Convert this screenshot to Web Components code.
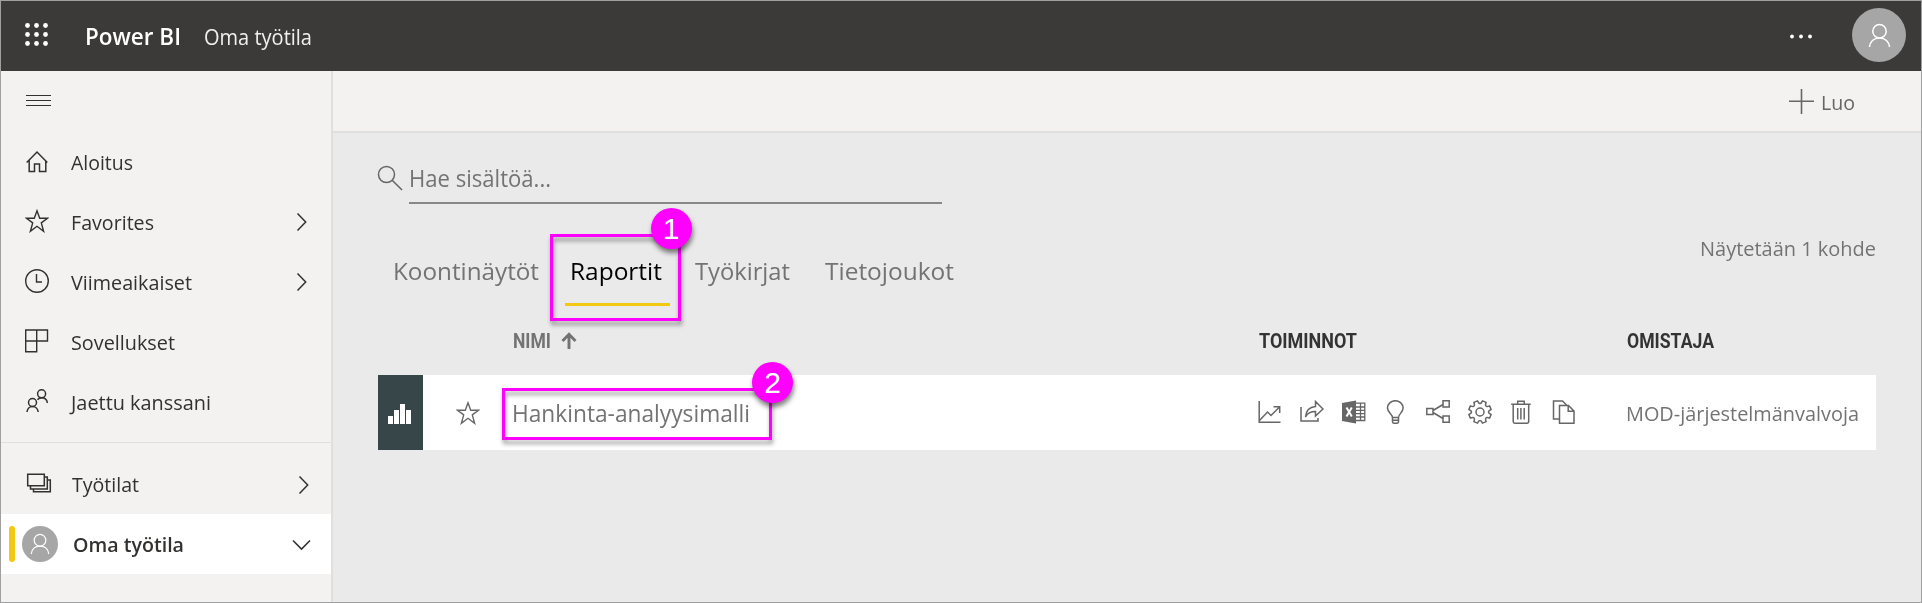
<!DOCTYPE html>
<html lang="fi">
<head>
<meta charset="utf-8">
<title>Power BI – Oma työtila</title>
<style>
html,body{margin:0;height:100%}
body{font-family:"Open Sans","Noto Sans",sans-serif;color:#323130;overflow:hidden}
</style>
</head>
<body>
<bi-app></bi-app>
<script>
const ICONS = {
  waffle:[23,23,'<g fill="#fff" stroke="none"><circle cx="2.5" cy="2.5" r="2.400"/><circle cx="11.5" cy="2.5" r="2.400"/><circle cx="20.5" cy="2.5" r="2.400"/><circle cx="2.5" cy="11.5" r="2.400"/><circle cx="11.5" cy="11.5" r="2.400"/><circle cx="20.5" cy="11.5" r="2.400"/><circle cx="2.5" cy="20.5" r="2.400"/><circle cx="11.5" cy="20.5" r="2.400"/><circle cx="20.5" cy="20.5" r="2.400"/></g>'],
  dots:[22,5,'<g fill="#fff" stroke="none"><circle cx="2" cy="2.5" r="1.900"/><circle cx="11" cy="2.5" r="1.900"/><circle cx="20" cy="2.5" r="1.900"/></g>'],
  burger:[25,12,'<path d="M0 1.5h25M0 6.5h25M0 11.5h25" stroke-width="1"/>'],
  home:[24,24,'<path d="M1.700 13.600 12 3l10.300 10.600M4.200 11.500V22.500H9.500V15H14.500V22.500H20.800V11.500" stroke-width="1.500"/>'],
  star:[24,24,'<path d="M12 1.800 14.700 9.300H22.500L16.300 13.900 18.600 22.300 12 17.300 5.400 22.300 7.700 13.900 1.500 9.300H9.300Z" stroke-width="1.400"/>'],
  clock:[24,24,'<circle cx="12" cy="12" r="11.300" stroke-width="1.400"/><path d="M11.500 5v8h5.500" stroke-width="1.400"/>'],
  apps:[24,24,'<path d="M.7 1H22.500V12H.7ZM11.700 1V22.700H.7V12" stroke-width="1.400"/>'],
  people:[24,24,'<g stroke-width="1.500"><circle cx="16.600" cy="4.800" r="4"/><circle cx="7.500" cy="13.500" r="4"/><path d="M2 23C2.300 20 4.500 17.500 7.500 17.500s5.400 2.500 5.700 5.500M12.500 10.800C13.500 9.500 15 8.800 16.600 8.800c3 0 5.400 2.200 5.800 5.200"/></g>'],
  stack:[26,22,'<path d="M1.700 1.200H18.300V12.800H1.700ZM4.500 13V16H21.300V4H18.500M7.500 16.300V18.800H24.300V7H21.500" stroke-width="1.500"/>'],
  right:[12,20,'<path d="M1.500 1.500 9.700 10 1.500 18.500" stroke-width="1.500"/>'],
  down:[19,12,'<path d="M1 1.500 9.500 10 18 1.500" stroke-width="1.600"/>'],
  person:[24,26,'<g stroke="#fff"><circle cx="12" cy="8.500" r="7"/><path d="M1.500 25C2 19.500 6 15.500 12 15.500S22 19.500 22.500 25"/></g>'],
  plus:[25,25,'<path d="M0 12.300h25M12.500 0v25" stroke-width="1.600"/>'],
  search:[26,26,'<circle cx="9.500" cy="9.500" r="8" stroke-width="1.500"/><path d="M15.200 15.200 25 25" stroke-width="1.600"/>'],
  up:[16,18,'<path d="M8 17V2.500M1.500 9 8 2.300 14.500 9" stroke-width="2.900"/>'],
  bars:[24,20,'<g fill="#fff" stroke="none"><path d="M0 12h5v8H0zM6 6h5v14H6zM12 0h5v20h-5zM18 6h5v14h-5z"/></g>'],
  trend:[24,24,'<path d="M1.200 1V22.300H22.500M1.500 20.500 9.500 12 13 15.500 21 7.500M15.500 6.800H21.700V13" stroke-width="1.500"/>'],
  share:[24,24,'<path d="M1 7V21H18V18M5.500 17C6 10.500 9.500 7 15.500 6.500V1.500L23 9 15.500 16V11.500C10.500 11.500 7.500 13 5.500 17Z" stroke-width="1.500"/>'],
  excel:[24,24,'<path d="M0 3 14 .5V23.500L0 21Z" fill="#666" stroke="none"/><path d="M14 3.200H22.800V20.500H14M14 7H23M14 10.300H23M14 13.700H23M14 17H23M18.500 3V20.500" stroke-width="1.300"/><path d="M4.500 7.500 9.800 16.500M9.800 7.500 4.500 16.500" stroke="#fff" stroke-width="2"/>'],
  bulb:[24,24,'<path d="M8.500 17.500C8.500 14 3.500 12.500 3.500 8a7.800 7.300 0 0 1 15.600 0C19.100 12.500 14.500 14 14.500 17.500ZM8.500 17.500V21.800Q8.500 23.200 9.800 23.200H13.200Q14.500 23.200 14.500 21.800V17.500M8.500 20.300H14.500" stroke-width="1.500"/>'],
  tree:[24,24,'<path d="M.8 8.500H7V14.500H.8ZM17 .8H23.200V7H17ZM17 16H23.200V22.200H17ZM7 10.500 17 4.500M7 12.500 17 18.500" stroke-width="1.500"/>'],
  gear:[24,24,'<circle cx="12" cy="12" r="4" stroke-width="1.500"/><path d="GEAR" stroke-width="1.500" stroke-linejoin="round"/>'],
  trash:[24,24,'<path d="M1.200 4.200H20.700M7.700 4V1.200H14.200V4M3.200 4.500V21.500Q3.200 23.200 4.900 23.200H16.900Q18.700 23.200 18.700 21.500V4.500M7.700 8V19.500M10.900 8V19.500M14.200 8V19.500" stroke-width="1.500"/>'],
  copy:[24,24,'<path d="M7.500 19H1.500V1H10.500L14.500 5M7.500 5.500H16.500L22 11V23.200H7.500ZM16.200 5.500V11.200H22" stroke-width="1.500"/>']
};
// Gear outline: eight teeth with curved valleys between them
ICONS.gear[2] = ICONS.gear[2].replace('GEAR', (() => {
  const pt = (deg, r) => { const a = deg * Math.PI / 180; return (12 + r * Math.cos(a)).toFixed(2) + ' ' + (12 + r * Math.sin(a)).toFixed(2); };
  let d = '';
  for (let i = 0; i < 8; i++) {
    const c = i * 45 + 22.5;
    d += (i ? '' : 'M' + pt(c - 10, 11.4)) + 'L' + pt(c + 10, 11.4) + 'C' + pt(c + 16, 7.6) + ' ' + pt(c + 29, 7.6) + ' ' + pt(c + 35, 11.4);
  }
  return d + 'Z';
})());

const define = (name, html, setup) => customElements.define(name, class extends HTMLElement {
  constructor(){ super(); this.attachShadow({mode:'open'}); }
  connectedCallback(){
    if (this.shadowRoot.childNodes.length) return;
    const t = document.createElement('template');
    t.innerHTML = typeof html === 'function' ? html(this) : html;
    this.shadowRoot.append(document.importNode(t.content, true));
    if (setup) setup(this);
  }
});

define('bi-app', `
<style>
:host{display:flex;flex-direction:column;box-sizing:border-box;width:1922px;height:603px;border:1px solid #a0a0a0;background:#eaeaea}
.body{display:flex;flex:1;min-height:0}
</style>
<app-header></app-header>
<div class="body"><nav-pane></nav-pane><main-view></main-view></div>`);

define('bi-icon', el => {
  const [w,h,s] = ICONS[el.getAttribute('name')];
  return `<style>:host{display:block;flex:none;width:${w}px;height:${h}px}svg{display:block;width:100%;height:100%}</style>
  <svg viewBox="0 0 ${w} ${h}" fill="none" stroke="currentColor">${s}</svg>`;
});

// A single line of text condensed to a given width
define('fit-text', `<style>:host{display:block;flex:none;white-space:nowrap}span{display:inline-block;transform-origin:0 50%}</style><span><slot></slot></span>`, el => {
  const w = +el.getAttribute('w'), s = el.shadowRoot.querySelector('span');
  el.style.width = w + 'px';
  const n = s.getBoundingClientRect().width;
  if (n) s.style.transform = `scaleX(${w / n})`;
});

define('user-avatar', `<style>:host{display:flex;flex:none;align-items:center;justify-content:center;border-radius:50%;background:#a6a6a6}</style><slot></slot>`);

define('app-header', `
<style>
:host{display:flex;flex:none;height:70px;background:#3b3a39;color:#fff;line-height:34px;box-sizing:border-box;padding:0 15px 0 24px;align-items:center}
.brand{font-size:23px;font-weight:600;margin-left:37px}
.ws{font-size:22px;margin-left:23px;color:#f0f0f0;font-weight:400}
fit-text{margin-top:-1px}
.dots{margin-left:auto;margin-right:40px}
user-avatar{width:54px;height:54px;margin-top:-2px}
user-avatar bi-icon{width:23px;height:25px;stroke-width:1.600}
</style>
<bi-icon name="waffle" style="margin-top:-3px"></bi-icon>
<fit-text class="brand" w="96">Power BI</fit-text>
<fit-text class="ws" w="108">Oma työtila</fit-text>
<bi-icon class="dots" name="dots"></bi-icon>
<user-avatar><bi-icon name="person"></bi-icon></user-avatar>`);

define('nav-item', el => `
<style>
:host{display:flex;align-items:center;box-sizing:border-box;height:60px;padding:0 23px 0 24px;font-size:20.500px;line-height:30px;--gap:20px}
:host([selected]){background:#fff;padding:0 20px 0 8px;font-weight:600}
.ico{display:flex;align-items:center;width:26px}
:host([selected]) .ico{width:51px}
.bar{width:6px;height:36px;border-radius:3px;background:#f2c811;margin-right:7px}
user-avatar{width:36px;height:36px}
user-avatar bi-icon{width:20px;height:22px;stroke-width:1.500}
fit-text{margin-left:var(--gap);padding-top:var(--drop,1px)}
.chev{margin-left:auto;padding-top:1px}
</style>
<div class="ico">${el.hasAttribute('selected') ? '<div class="bar"></div><user-avatar><bi-icon name="person"></bi-icon></user-avatar>' : `<bi-icon name="${el.getAttribute('icon')}"></bi-icon>`}</div>
<fit-text w="${el.getAttribute('w')}">${el.getAttribute('label')}</fit-text>
${el.hasAttribute('chev') ? `<bi-icon class="chev" name="${el.getAttribute('chev')}"></bi-icon>` : ''}`);

define('nav-pane', `
<style>
:host{display:block;flex:none;width:330px;background:#f3f2f1;border-right:2px solid #e1dfdd}
.top{height:60px;box-sizing:border-box;padding:23px 0 0 25px}
hr{border:0;border-top:1px solid #e1dfdd;margin:11px 0}
</style>
<div class="top"><bi-icon name="burger"></bi-icon></div>
<nav-item icon="home" label="Aloitus" w="62"></nav-item>
<nav-item icon="star" label="Favorites" w="83" chev="right"></nav-item>
<nav-item icon="clock" label="Viimeaikaiset" w="121" chev="right"></nav-item>
<nav-item icon="apps" label="Sovellukset" w="104"></nav-item>
<nav-item icon="people" label="Jaettu kanssani" w="140"></nav-item>
<hr>
<nav-item icon="stack" label="Työtilat" w="67" chev="right" style="padding-left:25px;padding-right:21px;--drop:0px"></nav-item>
<nav-item selected label="Oma työtila" w="111" chev="down" style="--gap:13px;--drop:0px"></nav-item>`);

// Magenta highlight laid over its content, with a numbered badge on the corner
define('call-out', el => `
<style>
:host{display:block;position:relative}
.frame{position:absolute;inset:var(--inset);border:3px solid #f0f;filter:drop-shadow(1px 4px 2px rgba(0,0,0,.38))}
.badge{position:absolute;right:var(--bx);top:var(--by);width:41px;height:41px;border-radius:50%;background:#f0f;color:#fff;box-shadow:1px 4px 5px rgba(0,0,0,.5);font:30px/41px "Liberation Sans",Arial,sans-serif;text-align:center;z-index:1}
</style><slot></slot><div class="frame"></div><div class="badge">${el.getAttribute('n')}</div>`);

define('search-box', `
<style>
:host{display:flex;color:#666;height:38px;margin-left:-1px}
bi-icon{margin-top:-1px}
.field{box-sizing:border-box;width:533px;margin-left:6px;height:38px;border-bottom:2px solid #888;font-size:23.500px;line-height:25px;color:#737373}
</style>
<bi-icon name="search"></bi-icon>
<div class="field"><fit-text w="142">Hae sisältöä...</fit-text></div>`);

define('tab-strip', `
<style>
:host{display:flex;font-size:24.500px;line-height:32px;color:#737373;height:51px}
.sel{box-sizing:border-box;width:105px;height:51px;padding-left:5px;color:#000;border-bottom:3px solid #f2c811}
call-out{margin:0 25px 0 26px;--inset:-21px -11px -15px -15px;--bx:-21.500px;--by:-47px}
</style>
<fit-text w="146">Koontinäytöt</fit-text>
<call-out n="1"><div class="sel"><fit-text w="92">Raportit</fit-text></div></call-out>
<fit-text w="95" style="margin-right:35px">Työkirjat</fit-text>
<fit-text w="129">Tietojoukot</fit-text>`);

define('report-table', `
<style>
:host{display:block;width:1498px;color:#737373}
.grid{display:grid;grid-template-columns:135px 746px 368px 1fr;align-items:center}
.head{height:30px;font:700 19.500px/30px Roboto,sans-serif;color:#333}
.head fit-text{margin-top:2px}
.name{display:flex;align-items:center;gap:10px;color:#737373}
.row{height:75px;margin-top:20px;background:#fff}
.lead{display:flex;align-items:center;height:75px}
.tile{display:flex;align-items:center;justify-content:center;width:45px;height:75px;background:#374649;margin-right:33px}
.tile bi-icon{margin:3px 0 0 -1px}
.lead>bi-icon{color:#666}
.title{font-size:24px;line-height:32px}
call-out{width:260px;--inset:-9px 1px -11px -11px;--bx:-20px;--by:-35px}
.act{display:flex;color:#666;gap:18px;margin:-2px 0 0 -.700px}
.own{font-size:20.500px;line-height:30px}
</style>
<div class="grid head"><span></span><div class="name"><fit-text w="38">NIMI</fit-text><bi-icon name="up"></bi-icon></div><fit-text w="98">TOIMINNOT</fit-text><fit-text w="87">OMISTAJA</fit-text></div>
<div class="grid row">
<div class="lead"><div class="tile"><bi-icon name="bars"></bi-icon></div><bi-icon name="star"></bi-icon></div>
<call-out n="2"><fit-text class="title" style="margin-left:-1px" w="238">Hankinta-analyysimalli</fit-text></call-out>
<div class="act"><bi-icon name="trend"></bi-icon><bi-icon name="share"></bi-icon><bi-icon name="excel"></bi-icon><bi-icon name="bulb"></bi-icon><bi-icon name="tree"></bi-icon><bi-icon name="gear"></bi-icon><bi-icon name="trash"></bi-icon><bi-icon name="copy"></bi-icon></div>
<fit-text class="own" style="margin-left:-1px" w="233">MOD-järjestelmänvalvoja</fit-text>
</div>`);

define('main-view', `
<style>
:host{display:block;flex:1;min-width:0}
.bar{display:flex;align-items:center;justify-content:flex-end;gap:7px;height:60px;background:#f3f2f1;border-bottom:2px solid #e1dfdd;padding-right:66px;color:#666;font-size:20.500px;line-height:30px}
.bar fit-text{padding-top:2px}
.content{padding:33px 45px 0}
.mid{display:flex;justify-content:space-between;margin-top:51px}
tab-strip{margin-left:15px}
.count{font-size:20.500px;line-height:30px;margin-top:-22px;color:#737373}
report-table{margin-top:19px}
</style>
<div class="bar"><bi-icon name="plus"></bi-icon><fit-text w="34">Luo</fit-text></div>
<div class="content">
<search-box></search-box>
<div class="mid"><tab-strip></tab-strip><fit-text class="count" w="176">Näytetään 1 kohde</fit-text></div>
<report-table></report-table>
</div>`);
</script>
</body>
</html>
